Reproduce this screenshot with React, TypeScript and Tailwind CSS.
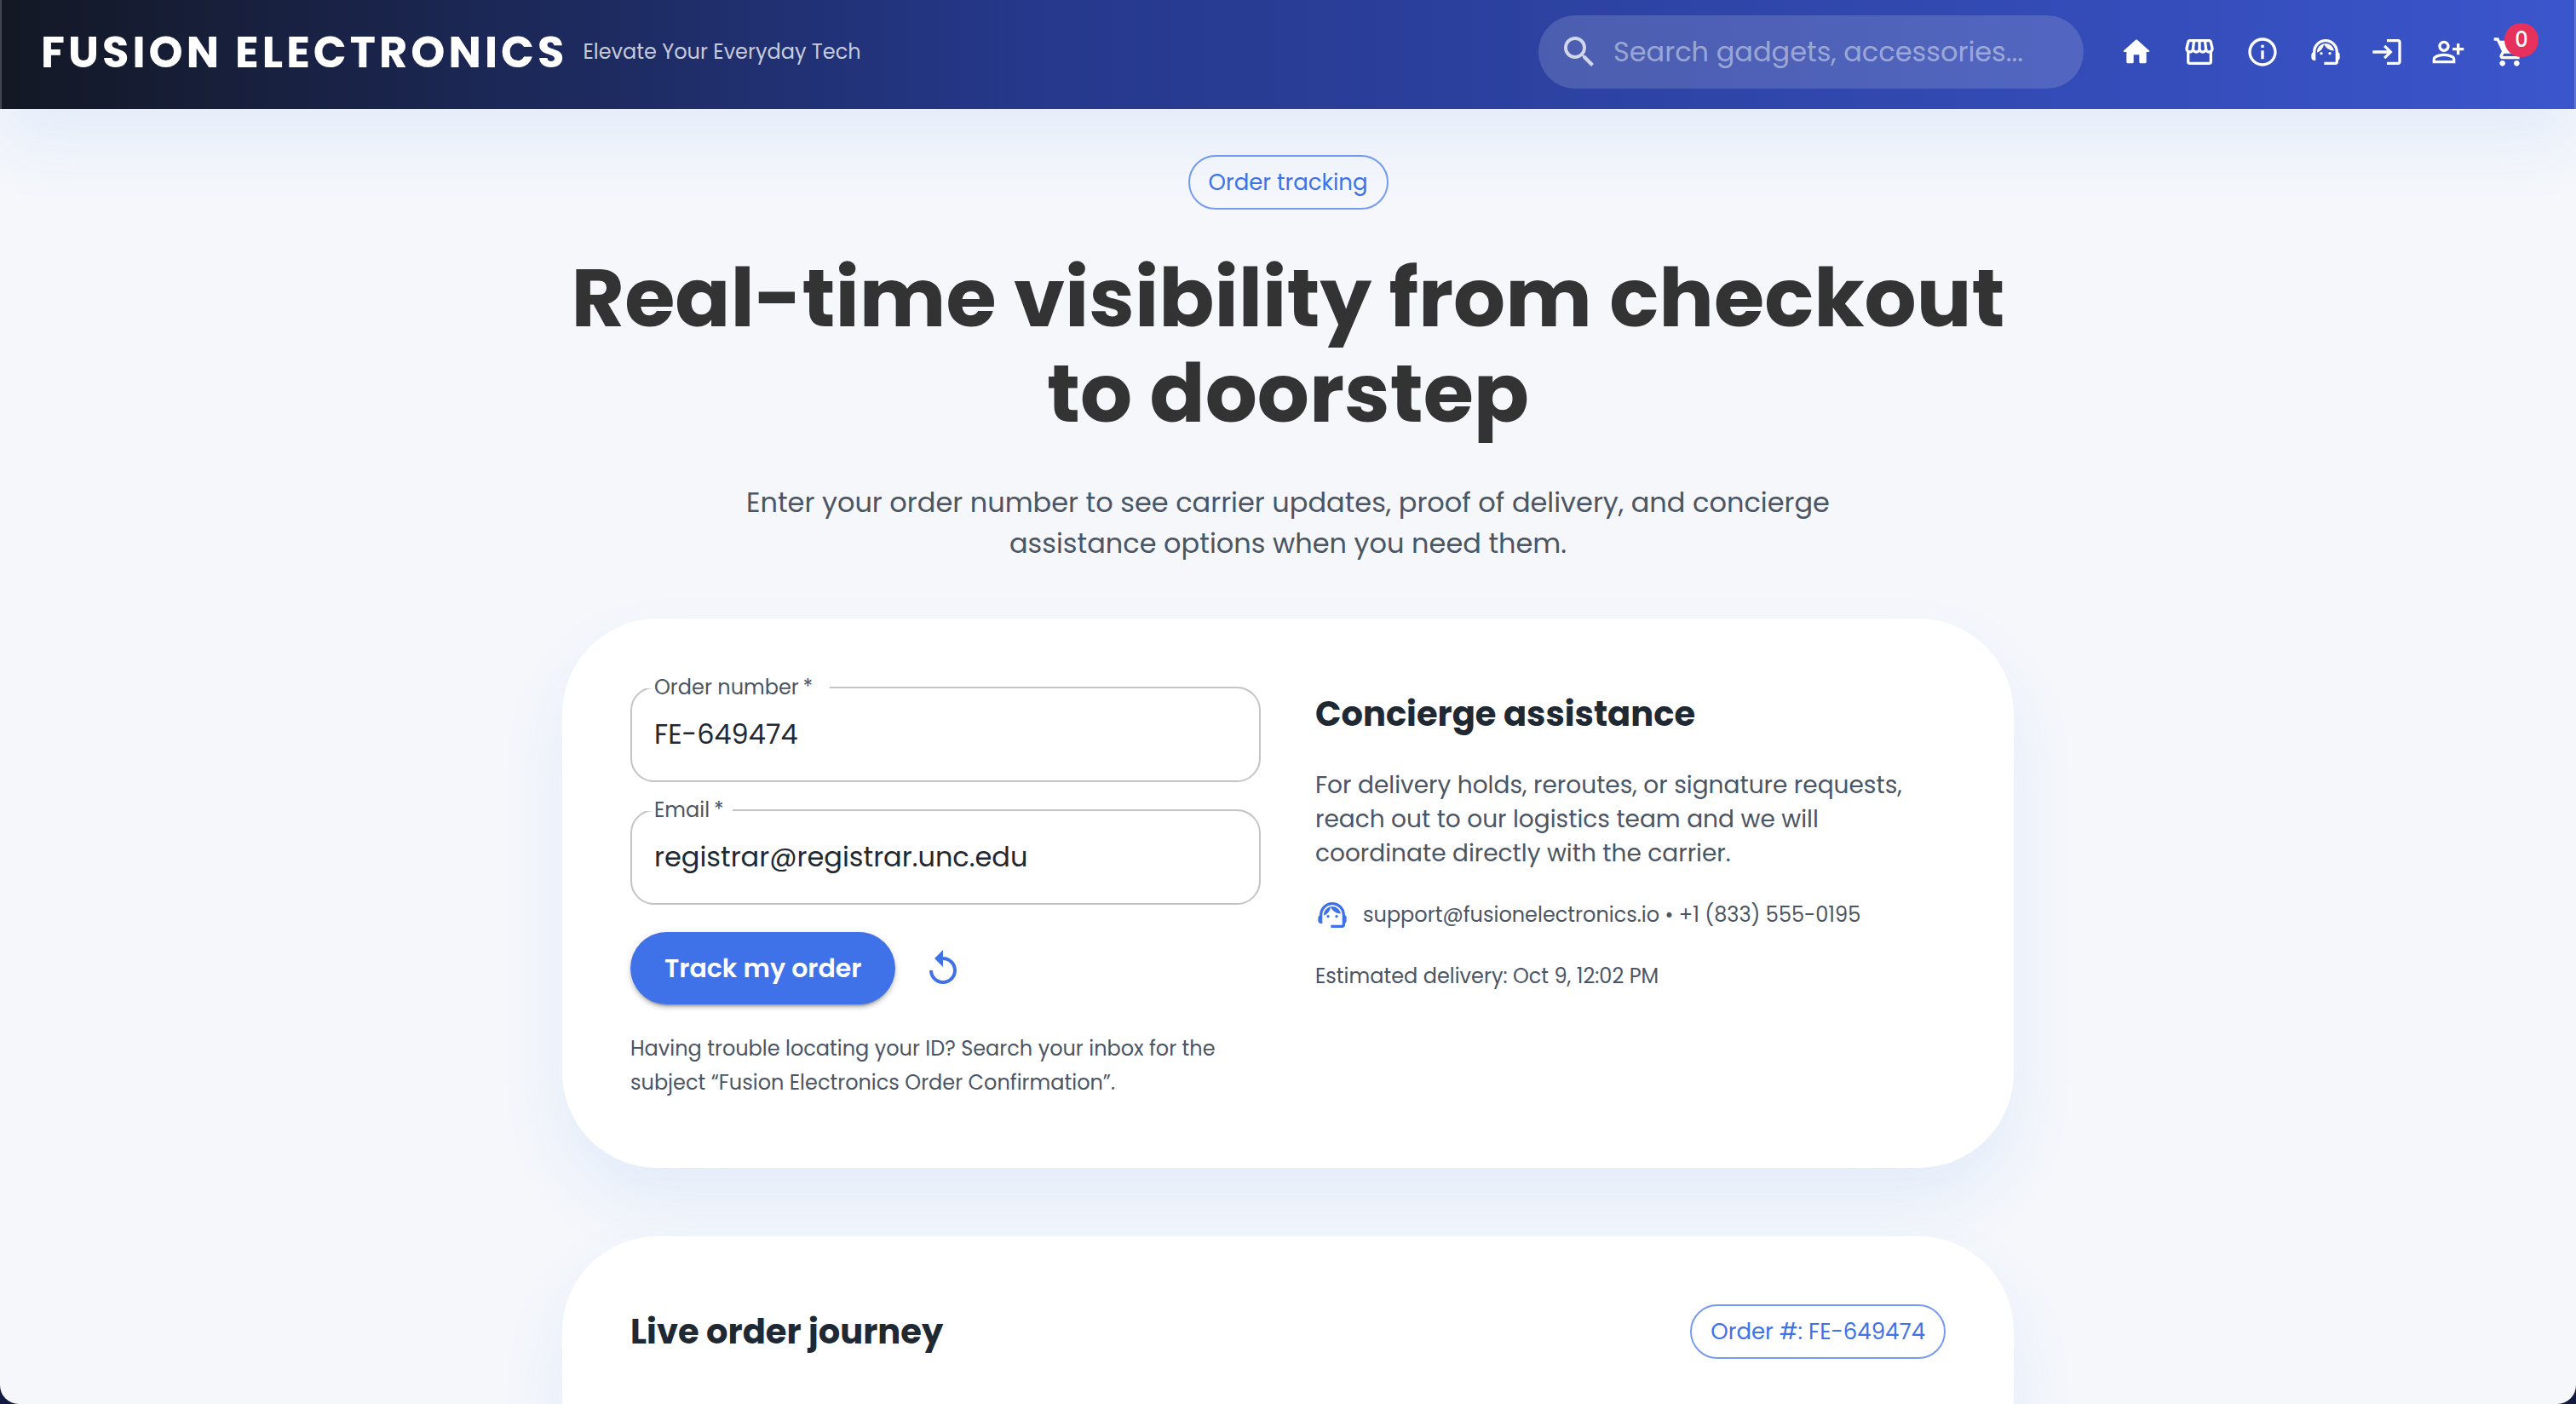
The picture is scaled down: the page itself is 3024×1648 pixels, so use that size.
import type { ReactNode } from "react";
import {
  MdInfoOutline,
  MdLogin,
  MdOutlinePersonAddAlt,
  MdOutlineStorefront,
  MdReplay,
  MdSearch,
  MdShoppingCart,
  MdSupportAgent,
} from "react-icons/md";

function NavLink({ label, children }: { label: string; children: ReactNode }) {
  return (
    <a href="#" aria-label={label} className="relative flex size-18 items-center justify-center text-[40px]">
      {children}
    </a>
  );
}

function Header() {
  return (
    <header className="relative z-10 flex h-32 shrink-0 items-center bg-[linear-gradient(90deg,#131824_0%,#25388b_40%,#3b55cc_100%)] pr-[42px] pb-1.5 pl-12 text-white shadow-[0_40px_80px_rgba(59,130,246,0.09),inset_2px_0_0_rgba(255,255,255,0.2),inset_-2px_0_0_rgba(255,255,255,0.2)]">
      <a href="#" className="text-[51px] font-bold tracking-[0.08em] whitespace-nowrap">
        FUSION ELECTRONICS
      </a>
      <p className="ml-[18px] text-2xl whitespace-nowrap text-white/75">Elevate Your Everyday Tech</p>
      <label className="mr-[26px] ml-auto flex h-[86px] w-[640px] items-center rounded-full bg-white/15 px-6">
        <MdSearch className="size-12 shrink-0 text-white/75" />
        <input
          type="search"
          aria-label="Search"
          placeholder="Search gadgets, accessories..."
          className="ml-4 min-w-0 flex-1 bg-transparent text-[32px] outline-none placeholder:text-white/45"
        />
      </label>
      <nav className="flex items-center">
        <div className="flex gap-0.5">
          <NavLink label="Home">
            <svg viewBox="0 0 24 24" className="size-10" fill="currentColor">
              <path d="M10 19v-5h4v5c0 .55.45 1 1 1h3c.55 0 1-.45 1-1v-7h1.7c.46 0 .68-.57.33-.87L12.67 3.6c-.38-.34-.96-.34-1.34 0l-8.36 7.53c-.34.3-.13.87.33.87H5v7c0 .55.45 1 1 1h3c.55 0 1-.45 1-1z" />
            </svg>
          </NavLink>
          <NavLink label="Shop"><MdOutlineStorefront /></NavLink>
          <NavLink label="About"><MdInfoOutline /></NavLink>
          <NavLink label="Support"><MdSupportAgent /></NavLink>
        </div>
        <NavLink label="Log in"><MdLogin /></NavLink>
        <NavLink label="Register"><MdOutlinePersonAddAlt /></NavLink>
        <NavLink label="Cart">
          <MdShoppingCart />
          <span className="absolute top-0.5 right-0.5 flex size-10 items-center justify-center rounded-full bg-[#e5315c] text-2xl font-medium">
            0
          </span>
        </NavLink>
      </nav>
    </header>
  );
}

function Chip({ children }: { children: ReactNode }) {
  return (
    <span className="inline-flex h-16 items-center rounded-full border-2 border-[#769bf0] px-[22px] text-[26px] whitespace-nowrap text-[#3f72e8]">
      {children}
    </span>
  );
}

function Card({ children, className = "" }: { children: ReactNode; className?: string }) {
  return (
    <section className={`w-full rounded-[112px] bg-white p-20 shadow-[0_40px_80px_rgba(59,130,246,0.09)] ${className}`}>
      {children}
    </section>
  );
}

type FieldProps = { id: string; label: string; value: string; type: string; notch: string };

function Field({ id, label, value, type, notch }: FieldProps) {
  return (
    <fieldset className="min-w-0 rounded-[28px] border-2 border-[#c4c4c4]">
      <legend className={`ml-4 h-0.5 pl-2.5 text-2xl leading-0.5 text-[#4b5563] ${notch}`}>
        <label htmlFor={id}>{label}&thinsp;*</label>
      </legend>
      <input
        id={id}
        type={type}
        defaultValue={value}
        required
        className="block h-[108px] w-full bg-transparent px-[26px] text-[32px] text-[#1f2933] outline-none"
      />
    </fieldset>
  );
}

export default function App() {
  return (
    <div className="h-screen bg-[#131a3f] font-[Poppins,Inter,sans-serif]">
      <div className="flex h-full flex-col overflow-hidden rounded-b-[22px] bg-[#f5f7fb]">
        <Header />
        <main className="min-h-0 flex-1 overflow-y-auto px-6 pt-[54px] [scrollbar-width:none]">
          <div className="mx-auto flex max-w-[1704px] flex-col items-center">
            <Chip>Order tracking</Chip>
            <h1 className="mt-12 text-center text-[96px] leading-[112px] font-bold text-[#333333]">
              Real-time visibility from checkout to doorstep
            </h1>
            <p className="mt-12 max-w-[1320px] text-center text-[32px] leading-12 text-[#4b5563]">
              Enter your order number to see carrier updates, proof of delivery, and concierge assistance options when you need them.
            </p>

            <Card className="mt-16 grid grid-cols-2 gap-16">
              <form className="flex flex-col gap-8" onSubmit={(e) => e.preventDefault()}>
                <Field id="order-number" label="Order number" value="FE-649474" type="text" notch="pr-5" />
                <Field id="email" label="Email" value="registrar@registrar.unc.edu" type="email" notch="pr-2.5" />
                <div className="flex h-[85px] items-center gap-4">
                  <button
                    type="submit"
                    className="h-full rounded-full bg-[#3f72e8] px-10 text-[30px] font-semibold whitespace-nowrap text-white shadow-[0_6px_2px_-4px_rgba(0,0,0,0.2),0_4px_4px_rgba(0,0,0,0.14),0_2px_10px_rgba(0,0,0,0.12)]"
                  >
                    Track my order
                  </button>
                  <button type="button" aria-label="Reset" className="flex size-20 items-center justify-center text-[#3f72e8]">
                    <MdReplay className="size-12" />
                  </button>
                </div>
                <p className="text-2xl leading-10 text-[#4b5563]">
                  Having trouble locating your ID? Search your inbox for the subject “Fusion Electronics Order Confirmation”.
                </p>
              </form>

              <div className="flex flex-col gap-8 text-[#4b5563]">
                <h2 className="text-[40px] leading-16 font-bold text-[#1f2933]">Concierge assistance</h2>
                <p className="text-[28px] leading-10">
                  For delivery holds, reroutes, or signature requests, reach out to our logistics team and we will coordinate directly with the carrier.
                </p>
                <div className="flex items-center gap-4">
                  <MdSupportAgent className="size-10 text-[#3f72e8]" />
                  <p className="text-2xl leading-10">support@fusionelectronics.io • +1 (833) 555-0195</p>
                </div>
                <p className="text-2xl leading-10">Estimated delivery: Oct 9, 12:02 PM</p>
              </div>
            </Card>

            <Card className="mt-20 min-h-[640px]">
              <div className="flex items-center justify-between">
                <h2 className="text-[40px] leading-16 font-bold text-[#1f2933]">Live order journey</h2>
                <Chip>Order #: FE-649474</Chip>
              </div>
            </Card>
          </div>
        </main>
      </div>
    </div>
  );
}
